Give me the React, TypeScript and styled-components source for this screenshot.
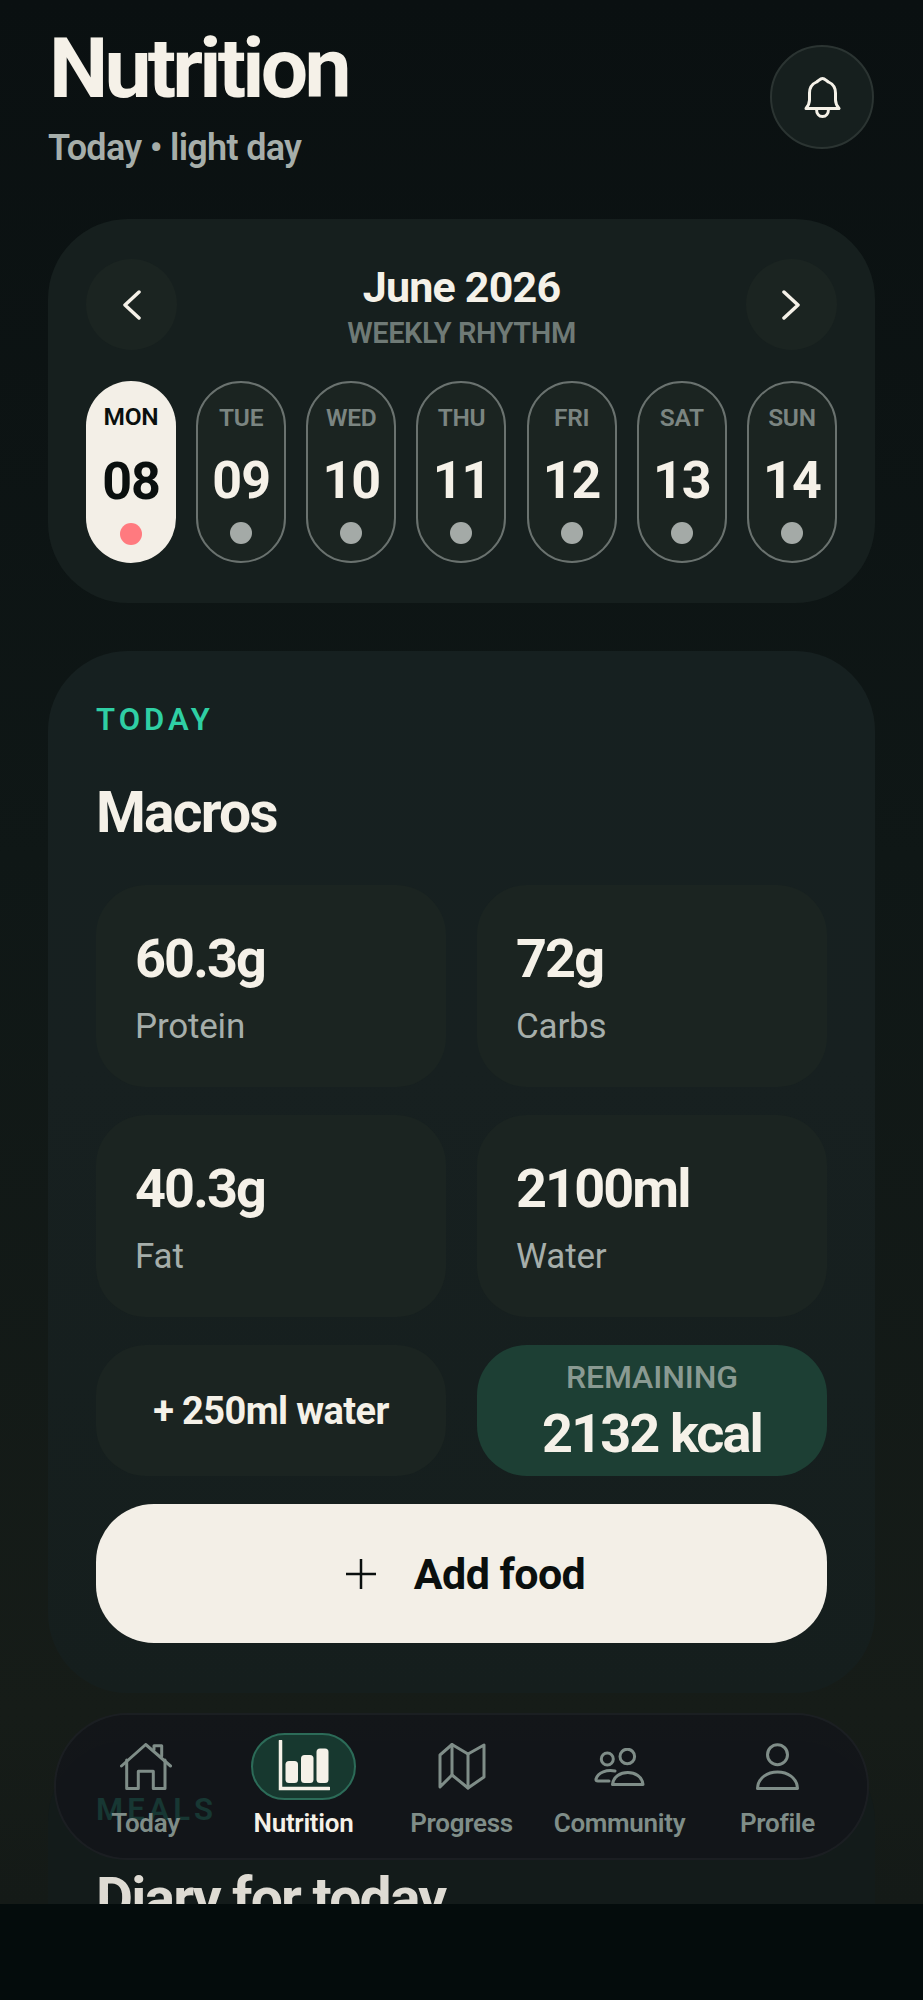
import React, { FC } from "react";
import styled, { createGlobalStyle } from "styled-components";

const GlobalStyle = createGlobalStyle`
  html, body {
    margin: 0;
    padding: 0;
    background: #040c0c;
  }
  * {
    box-sizing: border-box;
  }
`;

const Screen = styled.div`
  position: relative;
  height: 1904px;
  overflow: hidden;
  padding: 0 48px;
  background: linear-gradient(180deg, #0a1011 0%, #0f1716 45%, #161c18 90%, #141a17 100%);
  font-family: Roboto, "Noto Sans", sans-serif;
  color: #f5f1e8;
`;

const Header = styled.header`
  display: flex;
  justify-content: space-between;
  align-items: flex-start;
  height: 219px;
  padding: 21px 1px 0 1px;
`;

const Title = styled.h1`
  margin: 0;
  font-size: 84px;
  line-height: 96px;
  font-weight: 700;
  letter-spacing: -3.8px;
`;

const Subtitle = styled.div`
  margin: 10px 0 0 -1px;
  font-size: 36px;
  line-height: 42px;
  font-weight: 600;
  letter-spacing: -0.7px;
  color: #a6aeaa;
`;

const BellButton = styled.button`
  display: flex;
  align-items: center;
  justify-content: center;
  width: 104px;
  height: 104px;
  margin-top: 24px;
  border-radius: 50%;
  border: 2.5px solid #2b3432;
  background: #161f1e;
  color: #f5f1e8;
`;

const WeekCard = styled.section`
  width: 827px;
  height: 384px;
  padding: 40px 38px 0;
  border-radius: 80px;
  background: #161f1e;
`;

const MonthRow = styled.div`
  display: flex;
  justify-content: space-between;
  height: 122px;
`;

const RoundNav = styled.button`
  display: flex;
  align-items: center;
  justify-content: center;
  width: 91px;
  height: 91px;
  border: 0;
  border-radius: 50%;
  background: #1b2421;
  color: #f5f1e8;
`;

const MonthLabel = styled.div`
  padding-top: 2px;
  text-align: center;
`;

const MonthTitle = styled.div`
  font-size: 43px;
  line-height: 52px;
  font-weight: 700;
  letter-spacing: -0.8px;
`;

const MonthSub = styled.div`
  margin-top: 3px;
  font-size: 29px;
  line-height: 34px;
  font-weight: 600;
  letter-spacing: -0.4px;
  color: #6f7a76;
`;

const DayGrid = styled.div`
  display: grid;
  grid-template-columns: repeat(7, 90px);
  justify-content: space-between;
`;

const DayPill = styled.div<{ $active?: boolean }>`
  display: flex;
  flex-direction: column;
  align-items: center;
  height: 182px;
  padding-top: ${({ $active }) => ($active ? "21px" : "20px")};
  border-radius: 45px;
  border: ${({ $active }) => ($active ? "0" : "2.5px solid #6a726f")};
  background: ${({ $active }) => ($active ? "#f3efe7" : "#1b2421")};
  color: ${({ $active }) => ($active ? "#0a0f0e" : "#f5f1e8")};
`;

const DayName = styled.div<{ $active?: boolean }>`
  font-size: 24.5px;
  line-height: 30px;
  font-weight: 600;
  letter-spacing: -0.3px;
  color: ${({ $active }) => ($active ? "#0a0f0e" : "#7b8581")};
`;

const DayNumber = styled.div<{ $active?: boolean }>`
  margin-top: ${({ $active }) => ($active ? "20.5px" : "19px")};
  font-size: 52px;
  line-height: 58px;
  font-weight: 700;
  letter-spacing: -1px;
`;

const DayDot = styled.span<{ $active?: boolean }>`
  width: 22px;
  height: 22px;
  margin-top: 12px;
  border-radius: 50%;
  background: ${({ $active }) => ($active ? "#ff7a7f" : "#a4aaa7")};
`;

const MacroCard = styled.section`
  width: 827px;
  height: 1042px;
  margin-top: 48px;
  padding: 52px 48px 0;
  border-radius: 80px;
  background: linear-gradient(180deg, #162020 0%, #172020 40%, #151e1d 100%);
`;

const Eyebrow = styled.div`
  font-size: 31px;
  line-height: 34px;
  font-weight: 600;
  letter-spacing: 4px;
  color: #2fcfa4;
`;

const SectionTitle = styled.h2`
  margin: 43px 0 0;
  font-size: 57px;
  line-height: 66px;
  font-weight: 700;
  letter-spacing: -1.8px;
`;

const TileGrid = styled.div`
  display: grid;
  grid-template-columns: 350px 350px;
  justify-content: space-between;
  row-gap: 28px;
  margin-top: 39px;
`;

const Tile = styled.div`
  height: 202px;
  padding: 43px 39px 0;
  border-radius: 50px;
  background: #1b2421;
`;

const TileValue = styled.div`
  font-size: 54px;
  line-height: 62px;
  font-weight: 700;
  letter-spacing: -1.9px;
`;

const TileLabel = styled.div`
  margin-top: 17px;
  font-size: 35px;
  line-height: 40px;
  font-weight: 400;
  letter-spacing: -0.2px;
  color: #a6aeaa;
`;

const ActionRow = styled.div`
  display: grid;
  grid-template-columns: 350px 350px;
  justify-content: space-between;
  margin-top: 28px;
`;

const WaterButton = styled.button`
  height: 131px;
  border: 0;
  border-radius: 50px;
  background: #1b2421;
  color: #f5f1e8;
  font-family: inherit;
  font-size: 38px;
  font-weight: 700;
  letter-spacing: -0.6px;
`;

const RemainingBox = styled.div`
  display: flex;
  flex-direction: column;
  align-items: center;
  height: 131px;
  padding-top: 13px;
  border-radius: 50px;
  background: #1d3f34;
`;

const RemainingLabel = styled.div`
  font-size: 32px;
  line-height: 38px;
  font-weight: 500;
  letter-spacing: -0.1px;
  color: #8a9a92;
`;

const RemainingValue = styled.div`
  margin-top: 7px;
  font-size: 54px;
  line-height: 62px;
  font-weight: 700;
  letter-spacing: -1.9px;
`;

const AddButton = styled.button`
  display: flex;
  align-items: center;
  justify-content: center;
  gap: 37px;
  width: 100%;
  height: 139px;
  margin-top: 28px;
  padding: 0 0 0 7px;
  border: 0;
  border-radius: 58px;
  background: #f3efe7;
  color: #0a0f0e;
  font-family: inherit;
  font-size: 43px;
  font-weight: 700;
  letter-spacing: -0.6px;
`;

const MealsCard = styled.section`
  width: 827px;
  height: 400px;
  margin-top: 48px;
  padding: 52px 48px 0;
  border-radius: 80px;
  background: #131b1a;
`;

const DiaryTitle = styled(SectionTitle)`
  margin-top: 39px;
  color: #dedbd3;
`;

const BottomNav = styled.nav`
  position: absolute;
  left: 54px;
  right: 54px;
  bottom: 44px;
  display: grid;
  grid-template-columns: repeat(5, 158px);
  justify-content: center;
  height: 147px;
  padding-top: 18px;
  border-radius: 74px;
  border: 2px solid rgba(255, 255, 255, 0.04);
  background: rgba(18, 21, 26, 0.82);
`;

const NavItem = styled.div<{ $active?: boolean }>`
  display: flex;
  flex-direction: column;
  align-items: center;
  font-size: 26px;
  line-height: 32px;
  font-weight: 600;
  letter-spacing: -0.3px;
  color: ${({ $active }) => ($active ? "#f5f1e8" : "#7f8d88")};
`;

const NavIconBox = styled.div<{ $active?: boolean }>`
  display: flex;
  align-items: center;
  justify-content: center;
  width: 105px;
  height: 67px;
  margin-bottom: 7px;
  border-radius: 34px;
  border: ${({ $active }) => ($active ? "2.5px solid #2c6b58" : "0")};
  background: ${({ $active }) => ($active ? "#17382f" : "transparent")};
`;

const days = [
  { name: "MON", num: "08", active: true },
  { name: "TUE", num: "09" },
  { name: "WED", num: "10" },
  { name: "THU", num: "11" },
  { name: "FRI", num: "12" },
  { name: "SAT", num: "13" },
  { name: "SUN", num: "14" },
];

const macros = [
  { value: "60.3g", label: "Protein" },
  { value: "72g", label: "Carbs" },
  { value: "40.3g", label: "Fat" },
  { value: "2100ml", label: "Water" },
];

const lineProps = {
  fill: "none",
  stroke: "currentColor",
  strokeWidth: 3,
  strokeLinecap: "round" as const,
  strokeLinejoin: "round" as const,
};

const BellIcon = () => (
  <svg width="37" height="41" viewBox="0 0 37 41" {...lineProps}>
    <path d="M2 31.5c2-2.5 3.5-4.500 3.500-8.500v-7c0-5 2.500-9 7-11 2-.8 3.500-3.500 6-3.500s4 2.700 6 3.500c4.500 2 7 6 7 11v7c0 4 1.500 6 3.500 8.500z" />
    <path d="M12.500 32c0 4.500 2.500 7.500 6 7.500s6-3 6-7.500" />
  </svg>
);

const ChevronLeft = () => (
  <svg width="19" height="30" viewBox="0 0 19 30" {...lineProps} strokeWidth={3.5}>
    <path d="M17 2 3 15l14 13" />
  </svg>
);

const ChevronRight = () => (
  <svg width="19" height="30" viewBox="0 0 19 30" {...lineProps} strokeWidth={3.5}>
    <path d="m2 2 14 13L2 28" />
  </svg>
);

const PlusIcon = () => (
  <svg width="32" height="32" viewBox="0 0 32 32" fill="none" stroke="currentColor" strokeWidth="2.5">
    <path d="M16 1v30M1 16h30" />
  </svg>
);

const HomeIcon = () => (
  <svg width="52" height="48" viewBox="0 0 52 48" {...lineProps}>
    <path d="M1.500 23 25.700 1.500 50.500 23" />
    <path d="M34 6.500V2.700h7.700V13" />
    <path d="M6.700 17v28.500h11.600V28.300h15v17.200H45V17" />
  </svg>
);

const ChartIcon = () => (
  <svg width="52" height="54" viewBox="0 0 52 54">
    <path d="M2.500 1v47.500H51" fill="none" stroke="currentColor" strokeWidth="3.500" strokeLinecap="round" />
    <rect x="7.500" y="21" width="12.500" height="22" rx="3.500" fill="currentColor" />
    <rect x="23" y="15" width="12.500" height="28" rx="3.500" fill="currentColor" />
    <rect x="38.500" y="8.500" width="12" height="34.500" rx="3.500" fill="currentColor" />
  </svg>
);

const MapIcon = () => (
  <svg width="48" height="47" viewBox="0 0 48 47" {...lineProps}>
    <path d="M2 12 14 1.500 30 11 46 2v32l-16 11-16-13L2 44z" />
    <path d="M14 1.500V32M30 11v34" />
  </svg>
);

const PeopleIcon = () => (
  <svg width="51" height="38" viewBox="0 0 51 38" {...lineProps}>
    <circle cx="13.300" cy="11" r="6" />
    <circle cx="33.300" cy="8.500" r="7.300" />
    <path d="M21 23c-8-1.500-17 1-19 8-.3 1.500.5 2 2 2h11" />
    <path d="M18.500 36.500c1.500-16 29-16 30.500 0z" />
  </svg>
);

const PersonIcon = () => (
  <svg width="45" height="47" viewBox="0 0 45 47" {...lineProps}>
    <circle cx="22.500" cy="11.700" r="10" />
    <path d="M2.500 45.500c1-22 39-22 40 0z" />
  </svg>
);

const navItems = [
  { label: "Today", icon: <HomeIcon /> },
  { label: "Nutrition", icon: <ChartIcon />, active: true },
  { label: "Progress", icon: <MapIcon /> },
  { label: "Community", icon: <PeopleIcon /> },
  { label: "Profile", icon: <PersonIcon /> },
];

const App: FC = () => {
  return (
    <>
      <GlobalStyle />
      <Screen>
        <Header>
          <div>
            <Title>Nutrition</Title>
            <Subtitle>Today • light day</Subtitle>
          </div>
          <BellButton>
            <BellIcon />
          </BellButton>
        </Header>

        <WeekCard>
          <MonthRow>
            <RoundNav>
              <ChevronLeft />
            </RoundNav>
            <MonthLabel>
              <MonthTitle>June 2026</MonthTitle>
              <MonthSub>WEEKLY RHYTHM</MonthSub>
            </MonthLabel>
            <RoundNav>
              <ChevronRight />
            </RoundNav>
          </MonthRow>
          <DayGrid>
            {days.map((day) => (
              <DayPill key={day.name} $active={day.active}>
                <DayName $active={day.active}>{day.name}</DayName>
                <DayNumber $active={day.active}>{day.num}</DayNumber>
                <DayDot $active={day.active} />
              </DayPill>
            ))}
          </DayGrid>
        </WeekCard>

        <MacroCard>
          <Eyebrow>TODAY</Eyebrow>
          <SectionTitle>Macros</SectionTitle>
          <TileGrid>
            {macros.map((macro) => (
              <Tile key={macro.label}>
                <TileValue>{macro.value}</TileValue>
                <TileLabel>{macro.label}</TileLabel>
              </Tile>
            ))}
          </TileGrid>
          <ActionRow>
            <WaterButton>+ 250ml water</WaterButton>
            <RemainingBox>
              <RemainingLabel>REMAINING</RemainingLabel>
              <RemainingValue>2132 kcal</RemainingValue>
            </RemainingBox>
          </ActionRow>
          <AddButton>
            <PlusIcon />
            Add food
          </AddButton>
        </MacroCard>

        <MealsCard>
          <Eyebrow>MEALS</Eyebrow>
          <DiaryTitle>Diary for today</DiaryTitle>
        </MealsCard>

        <BottomNav>
          {navItems.map((item) => (
            <NavItem key={item.label} $active={item.active}>
              <NavIconBox $active={item.active}>{item.icon}</NavIconBox>
              {item.label}
            </NavItem>
          ))}
        </BottomNav>
      </Screen>
    </>
  );
};

export default App;
